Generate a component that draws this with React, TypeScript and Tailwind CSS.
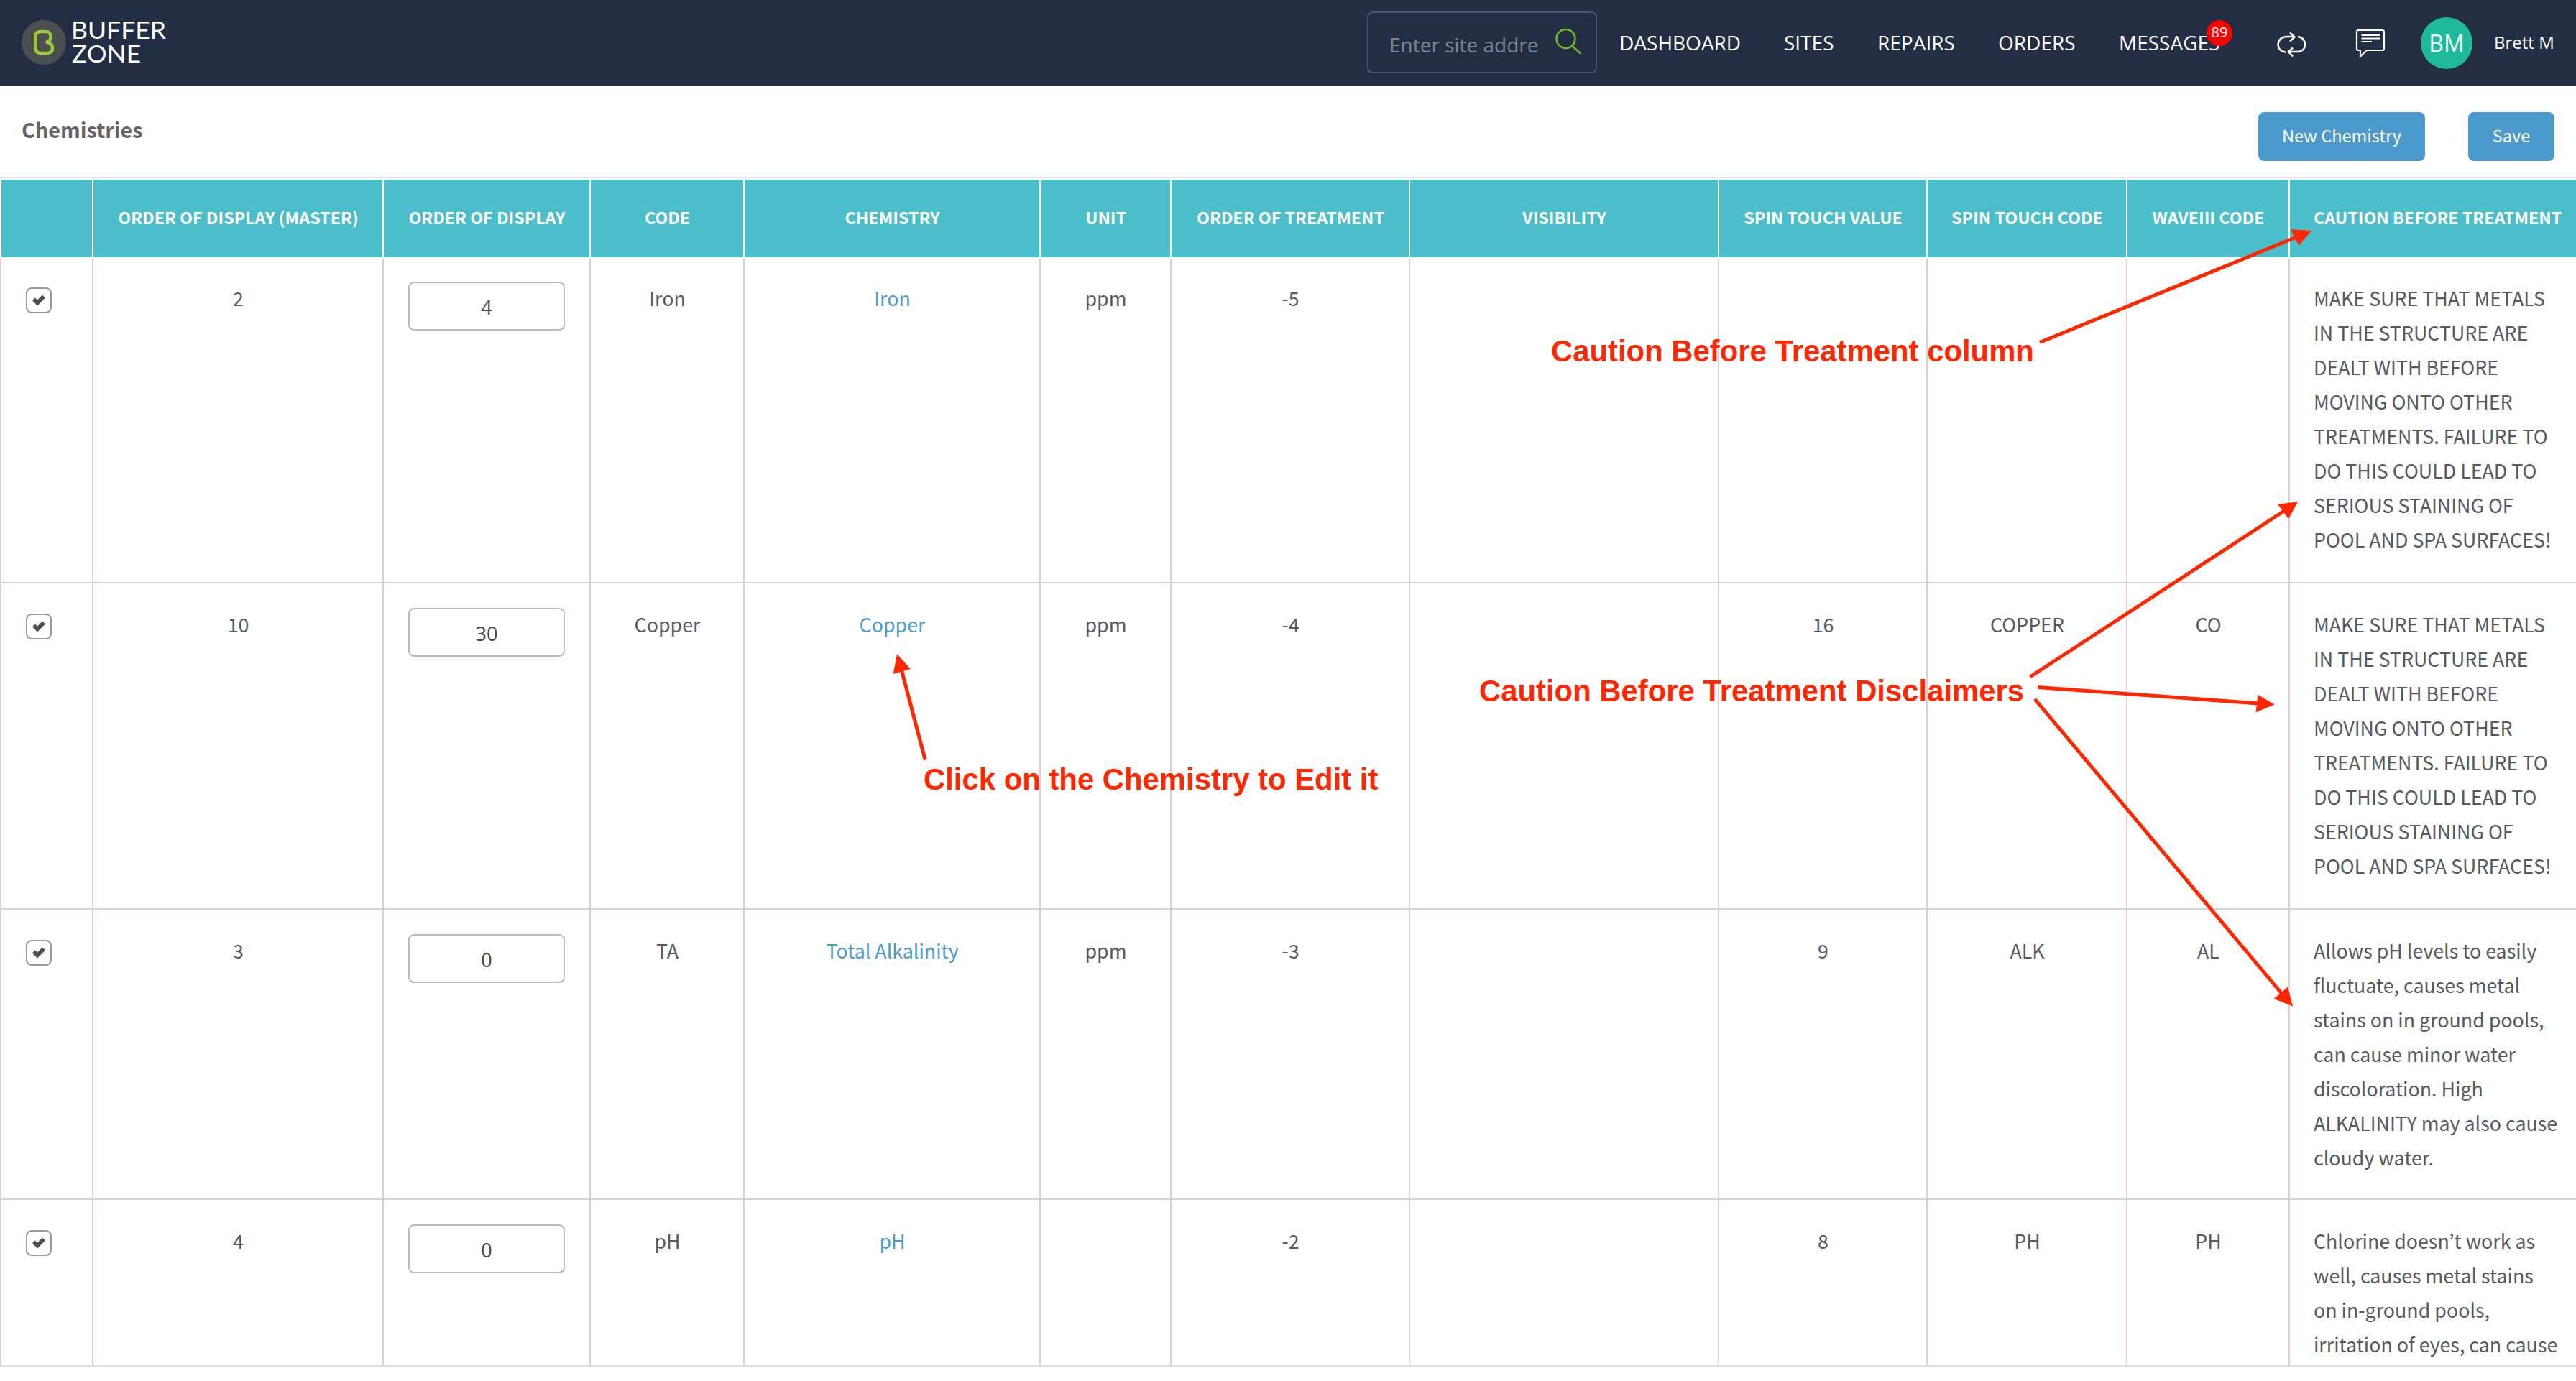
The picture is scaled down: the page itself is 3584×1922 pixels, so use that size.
import { clsx } from "clsx";

const columns = [
  "",
  "ORDER OF DISPLAY (MASTER)",
  "ORDER OF DISPLAY",
  "CODE",
  "CHEMISTRY",
  "UNIT",
  "ORDER OF TREATMENT",
  "VISIBILITY",
  "SPIN TOUCH VALUE",
  "SPIN TOUCH CODE",
  "WAVEIII CODE",
  "CAUTION BEFORE TREATMENT",
];

const metals =
  "MAKE SURE THAT METALS\nIN THE STRUCTURE ARE\nDEALT WITH BEFORE\nMOVING ONTO OTHER\nTREATMENTS. FAILURE TO\nDO THIS COULD LEAD TO\nSERIOUS STAINING OF\nPOOL AND SPA SURFACES!";

const chemistries = [
  {
    master: "2", order: "4", code: "Iron", name: "Iron", unit: "ppm", treatment: "-5",
    spinValue: "", spinCode: "", wave: "", caution: metals, height: "h-[454px]",
  },
  {
    master: "10", order: "30", code: "Copper", name: "Copper", unit: "ppm", treatment: "-4",
    spinValue: "16", spinCode: "COPPER", wave: "CO", caution: metals, height: "h-[454px]",
  },
  {
    master: "3", order: "0", code: "TA", name: "Total Alkalinity", unit: "ppm", treatment: "-3",
    spinValue: "9", spinCode: "ALK", wave: "AL", height: "h-[404px]",
    caution: "Allows pH levels to easily\nfluctuate, causes metal\nstains on in ground pools,\ncan cause minor water\ndiscoloration. High\nALKALINITY may also cause\ncloudy water.",
  },
  {
    master: "4", order: "0", code: "pH", name: "pH", unit: "", treatment: "-2",
    spinValue: "8", spinCode: "PH", wave: "PH", height: "h-[404px]",
    caution: "Chlorine doesn’t work as\nwell, causes metal stains\non in-ground pools,\nirritation of eyes, can cause",
  },
];

const grid =
  "grid grid-cols-[128px_404px_288px_214px_412px_182px_332px_430px_290px_278px_226px_398px]";

// line from the label to the base of the head, then the head itself
const arrows = [
  { from: [2838, 476.5], to: [3195, 330], head: "3216,321 3187,319.3 3198.4,341.7" },
  { from: [2824.5, 942], to: [3178, 711], head: "3197,698.3 3169,701.7 3184,722" },
  { from: [2835.5, 956.6], to: [3142, 979], head: "3164.5,980.4 3141.5,966.8 3138.5,991.5" },
  { from: [2831, 973], to: [3174, 1382], head: "3190,1400.6 3183,1373.5 3163.7,1390" },
  { from: [1287.2, 1057.5], to: [1254.5, 933], head: "1248,910.3 1242.7,938 1266.9,931" },
];

function Logo() {
  return (
    <svg width="204" height="64" viewBox="30 27 204 64" className="block overflow-visible">
      <circle cx="61" cy="59" r="31" fill="#4d4e4f" />
      <path
        d="M65 58.7C69 58 70.5 55 70.5 51C70.5 46.5 68 44 64 44H57C52 44 49.5 46.5 49.5 51V67C49.5 72 52 74 57 74H65C70 74 73 71.5 73 67C73 62.5 70 59.5 65 58.7Z"
        fill="none"
        stroke="#98ca3c"
        strokeWidth="4.6"
        strokeLinejoin="round"
      />
      <g fill="#fff" fontFamily="Lato, sans-serif" fontSize="32">
        <text x="99" y="54" textLength="132" lengthAdjust="spacingAndGlyphs">BUFFER</text>
        <text x="100" y="86.500" textLength="96" lengthAdjust="spacingAndGlyphs">ZONE</text>
      </g>
    </svg>
  );
}

function Header() {
  return (
    <header className="flex h-[120px] items-start bg-[#232e45] font-['Open_Sans',sans-serif] text-[28px] leading-[40px] text-white">
      <div className="ml-[30px] mt-[27px]">
        <Logo />
      </div>
      <div className="ml-[1668px] mt-4 flex h-[86px] w-[320px] shrink-0 items-start rounded-lg border-2 border-[#48556f] pl-[29px]">
        <div className="mt-[24px] w-[208px] shrink-0 overflow-hidden whitespace-nowrap text-[#7c8490]">Enter site addre</div>
        <svg width="40" height="40" viewBox="0 0 40 40" className="ml-[20px] mt-[20px] shrink-0" fill="none" stroke="#6cc024" strokeWidth="2.500">
          <circle cx="17.500" cy="16" r="13" />
          <path d="M26.500 26L38 36.500" />
        </svg>
      </div>
      <nav className="ml-[31px] mt-[39px] flex shrink-0 whitespace-nowrap">
        <span className="w-[229px]">DASHBOARD</span>
        <span className="w-[130px]">SITES</span>
        <span className="w-[168px]">REPAIRS</span>
        <span className="w-[168px]">ORDERS</span>
        <span className="relative w-[220px]">
          MESSAGES
          <span className="absolute left-[122px] -top-[11px] size-9 rounded-full bg-[#ff0000] text-center text-[20px] leading-[34px]">89</span>
        </span>
      </nav>
      <svg width="40" height="40" viewBox="0 0 40 40" className="mt-[41px] shrink-0" fill="none" stroke="#fff" strokeWidth="2.500">
        <path d="M24 10H14C6 10 1.500 15 1.500 21C1.500 27 6 31 12 31.500" />
        <path d="M18 4.500L24.500 10.500L18 16.500" />
        <path d="M29 10C35 10.500 39 15 39 21C39 27 35 31 27.500 31H17" />
        <path d="M22 25.500L16 31L22 37.500" />
      </svg>
      <svg width="42" height="42" viewBox="0 0 42 42" className="ml-[69px] mt-[40px] shrink-0" fill="none" stroke="#fff" strokeWidth="2.200">
        <path d="M4.500 2H37.500Q40 2 40 4.500V27.500Q40 30 37.500 30H16L7 38.500V30H4.500Q2 30 2 27.500V4.500Q2 2 4.500 2Z" />
        <path d="M8.500 9H34M8.500 13.500H34M8.500 18H23" />
      </svg>
      <div className="ml-[49px] mt-6 size-[72px] shrink-0 rounded-full bg-[#1eba9b] text-center text-[32px] leading-[71px]">BM</div>
      <div className="ml-[30px] mt-[39px] whitespace-nowrap text-[24px]">Brett M</div>
    </header>
  );
}

function Button({ children, className }: { children: string; className: string }) {
  return (
    <button className={clsx("h-[68px] rounded-lg bg-[#4c9acd] pb-[5px] text-center text-[23.5px] text-white", className)}>
      {children}
    </button>
  );
}

function Checkbox() {
  return (
    <span className="ml-[34px] mt-[42px] flex size-9 items-center justify-center rounded-lg border-2 border-[#999]">
      <svg width="18" height="16" viewBox="0 0 18 16" fill="#4d4e50">
        <path d="M0 8.300L3.800 4.500L7 7.500L14 .5L18 4.500L7 15.500Z" />
      </svg>
    </span>
  );
}

function Cell({ children, className }: { children?: React.ReactNode; className?: string }) {
  return <div className={clsx("border-r-2 border-[#ddd0d5] pl-px pt-[33px] text-center", className)}>{children}</div>;
}

export default function App() {
  return (
    <div className="relative h-[1922px] w-[3584px] overflow-hidden bg-[#fefefe] font-['Noto_Sans_CJK_KR',sans-serif] text-[26.8px] leading-[48px] text-[#555a60]">
      <Header />

      {/* Title bar */}
      <div className="flex h-[128px] items-start border-b-2 border-[#dfe3ea]">
        <h1 className="ml-[30px] mt-[36px] text-[28.8px] font-bold text-[#666]">Chemistries</h1>
        <div className="ml-auto mr-[30px] mt-9 flex gap-[60px]">
          <Button className="w-[232px]">New Chemistry</Button>
          <Button className="w-[120px]">Save</Button>
        </div>
      </div>

      {/* Chemistries table */}
      <div className="mt-0.5 h-[1652px] overflow-hidden border-b-2 border-[#dde2e7]">
        <div className={clsx(grid, "relative z-10 h-[110px] border-b-2 border-l-2 border-white bg-[#4cbdca] bg-clip-padding")}>
          {columns.map((title, i) => (
            <div
              key={i}
              className={clsx(
                "whitespace-nowrap pt-[28px] text-[23.25px] font-bold text-white",
                i < 11 ? "border-r-2 border-white pl-px text-center" : "pl-[33px]"
              )}
            >
              {title}
            </div>
          ))}
        </div>
        <div className="-mt-0.5 border-l-2 border-[#ddd0d5]">
          {chemistries.map((row) => (
            <div key={row.name} className={clsx(grid, row.height, "border-b-2 border-[#ddd0d5]")}>
              <div className="border-r-2 border-[#ddd0d5]">
                <Checkbox />
              </div>
              <Cell>{row.master}</Cell>
              <div className="border-r-2 border-[#ddd0d5] pl-[34px] pt-[34px]">
                <div className="h-[68px] w-[218px] rounded-lg border-2 border-[#bbb] pt-[10px] text-center font-['Open_Sans',sans-serif] text-[27px] text-[#444]">
                  {row.order}
                </div>
              </div>
              <Cell>{row.code}</Cell>
              <Cell className="text-[#4b9bcb]">{row.name}</Cell>
              <Cell>{row.unit}</Cell>
              <Cell>{row.treatment}</Cell>
              <Cell />
              <Cell>{row.spinValue}</Cell>
              <Cell>{row.spinCode}</Cell>
              <Cell>{row.wave}</Cell>
              <div className="whitespace-pre pl-[33px] pt-[33px]">{row.caution}</div>
            </div>
          ))}
        </div>
      </div>

      {/* Callouts drawn over the table */}
      <div className="pointer-events-none absolute inset-0 z-20 whitespace-nowrap font-['Liberation_Sans',sans-serif] text-[41.85px] font-bold text-[#ff2600]">
        <svg width="3584" height="1922" className="absolute inset-0" fill="#ff2600" stroke="#ff2600">
          {arrows.map(({ from, to, head }) => (
            <g key={head}>
              <line x1={from[0]} y1={from[1]} x2={to[0]} y2={to[1]} strokeWidth="5" />
              <polygon points={head} stroke="none" />
            </g>
          ))}
        </svg>
        <span className="absolute left-[2158px] top-[465px]">Caution Before Treatment column</span>
        <span className="absolute left-[2058px] top-[938px]">Caution Before Treatment Disclaimers</span>
        <span className="absolute left-[1285px] top-[1061px]">Click on the Chemistry to Edit it</span>
      </div>
    </div>
  );
}
